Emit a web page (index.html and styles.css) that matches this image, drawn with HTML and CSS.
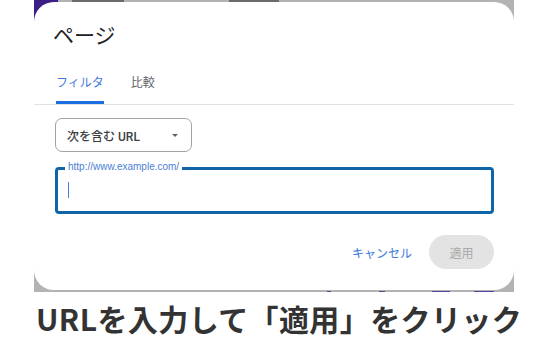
FILE: index.html
```html
<!DOCTYPE html>
<html lang="ja">
<head>
  <meta charset="UTF-8" />
  <meta name="viewport" content="width=device-width, initial-scale=1.0" />
  <title>ページ フィルタ</title>
  <link rel="stylesheet" href="styles.css">
</head>
<body>
  <div class="shot">
    <span class="bg-corner"></span>
    <span class="frag top-a"></span>
    <span class="frag top-b"></span>
    <span class="frag bot-a"></span>
    <span class="frag bot-b"></span>
    <span class="frag bot-c"></span>
    <span class="frag bot-d"></span>

    <div class="dialog">
      <h2 class="dlg-title">ページ</h2>

      <div class="tabs">
        <span class="tab active">フィルタ</span>
        <span class="tab">比較</span>
      </div>

      <div class="dlg-body">
        <div class="select">次を含む URL<span class="caret"></span></div>
        <div class="field">
          <span class="field-label">http://www.example.com/</span>
          <span class="cursor"></span>
        </div>
      </div>

      <div class="actions">
        <button class="btn-text">キャンセル</button>
        <button class="btn-pill" disabled>適用</button>
      </div>
    </div>
  </div>

  <p class="caption">URLを入力して「適用」をクリック</p>
</body>
</html>
```

FILE: styles.css
```css
body {
  margin: 0;
  background: #fff;
  font-family: Roboto, "Noto Sans CJK JP", sans-serif;
}
.shot {
  position: relative;
  width: 480px;
  height: 292px;
  margin-left: 34px;
  background: #b3b3b3;
  overflow: hidden;
}
.bg-corner {
  position: absolute;
  left: 0;
  top: 0;
  width: 24px;
  height: 24px;
  background: #3b1f86;
}
.frag {
  position: absolute;
  height: 2px;
}
.top-a { top: 0; left: 38px; width: 52px; background: #6b6b6b; }
.top-b { top: 0; left: 195px; width: 50px; background: #6b6b6b; }
.bot-a { top: 291px; left: 293px; width: 4px; height: 1px; background: #5a43a0; }
.bot-b { top: 291px; left: 345px; width: 6px; height: 1px; background: #5a43a0; }
.bot-c { top: 291px; left: 398px; width: 18px; height: 1px; background: #5a43a0; }
.bot-d { top: 291px; left: 440px; width: 20px; height: 1px; background: #5a43a0; }

.dialog {
  position: relative;
  height: 288px;
  margin-top: 2px;
  padding-top: 22px;
  box-sizing: border-box;
  background: #fff;
  border-radius: 20px;
}
.dlg-title {
  margin: 0 0 0 19px;
  font-size: 21px;
  line-height: 24px;
  font-weight: 400;
  color: #202124;
}
.tabs {
  display: flex;
  gap: 27px;
  margin-top: 25px;
  padding-left: 22px;
  border-bottom: 1px solid #e2e2e2;
}
.tab {
  font-size: 12px;
  line-height: 20px;
  padding-bottom: 8px;
  border-bottom: 3px solid transparent;
  color: #5f6368;
}
.tab.active {
  color: #3f7be0;
  border-bottom-color: #1a6ee0;
}
.dlg-body {
  padding: 0 20px 0 21px;
}
.select {
  display: flex;
  align-items: center;
  width: 137px;
  height: 34px;
  margin-top: 13px;
  padding-left: 11px;
  box-sizing: border-box;
  border: 1px solid #a3a3a3;
  border-radius: 7px;
  font-size: 12px;
  font-weight: 500;
  color: #3c4043;
}
.caret {
  margin-left: auto;
  margin-right: 13px;
  border-left: 3px solid transparent;
  border-right: 3px solid transparent;
  border-top: 3px solid #5f6368;
}
.field {
  position: relative;
  height: 47px;
  margin-top: 15px;
  box-sizing: border-box;
  border: 3px solid #0f65a7;
  border-radius: 4px;
}
.field-label {
  position: absolute;
  top: -9px;
  left: 7px;
  padding: 0 3px;
  background: #fff;
  font-family: "Liberation Sans", Arial, sans-serif;
  font-size: 10px;
  line-height: 12px;
  color: #4b7ed6;
}
.cursor {
  display: block;
  width: 1px;
  height: 16px;
  margin: 12px 0 0 10px;
  background: #4b7ed6;
}
.actions {
  display: flex;
  justify-content: flex-end;
  align-items: center;
  margin-top: 21px;
  padding-right: 20px;
}
.btn-text {
  margin-right: 17px;
  padding: 0;
  border: none;
  background: none;
  font-family: inherit;
  font-size: 12px;
  color: #3b78db;
}
.btn-pill {
  width: 65px;
  height: 34px;
  border: none;
  border-radius: 17px;
  background: #e3e3e3;
  font-family: inherit;
  font-size: 12px;
  color: #a8a8a8;
}
.caption {
  margin: 8px 0 0 36px;
  font-family: "Noto Sans CJK JP", sans-serif;
  font-size: 30px;
  line-height: 36px;
  font-weight: 700;
  letter-spacing: 0.4px;
  color: #333;
}
```
